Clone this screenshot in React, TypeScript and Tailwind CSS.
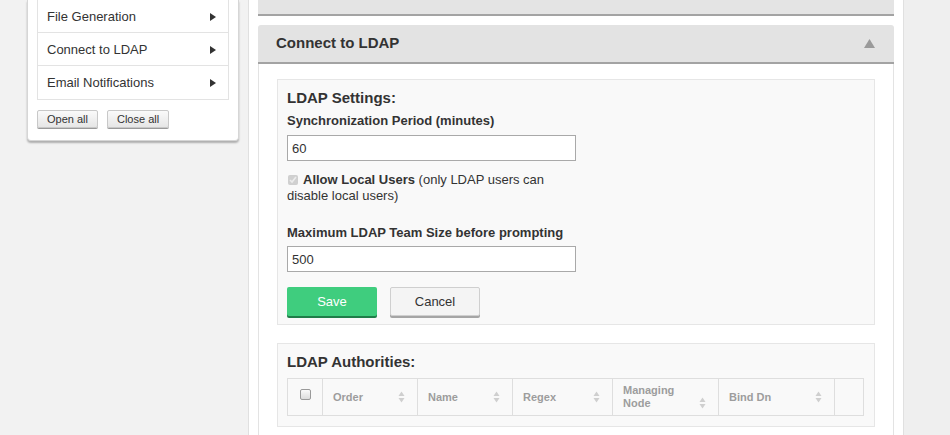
import React from 'react';

const menuItems = ['File Generation', 'Connect to LDAP', 'Email Notifications'];

const columns = [
  { label: 'Order', width: 'w-[95px]' },
  { label: 'Name', width: 'w-[95px]' },
  { label: 'Regex', width: 'w-[100px]' },
  { label: 'Managing Node', width: 'w-[106px]' },
  { label: 'Bind Dn', width: 'w-[116px]' },
];

const SortIcon: React.FC = () => (
  <svg width="7" height="12" viewBox="0 0 7 12" className="shrink-0">
    <path d="M3.5 0.5 L6.5 5 L0.5 5 Z" fill="#cfcfcf" />
    <path d="M0.5 7 L6.5 7 L3.5 11.5 Z" fill="#cfcfcf" />
  </svg>
);

const SidebarButton: React.FC<{ label: string }> = ({ label }) => (
  <button className="h-[18px] rounded-[2px] border border-[#c8c8c8] bg-gradient-to-b from-[#fafafa] to-[#e6e6e6] px-[9px] text-[11px] leading-none text-[#333] shadow-[0_1px_0_#9a9a9a]">
    {label}
  </button>
);

export default function App() {
  return (
    <div className="flex h-[435px] w-[950px] overflow-hidden bg-[#f2f2f2] font-['Liberation_Sans',Arial,sans-serif] text-[#333]">
      {/* left navigation */}
      <aside className="w-[248px] shrink-0 pl-[27px] pr-[9px]">
        <div className="rounded-b-[4px] border border-t-0 border-[#d6d6d6] bg-white px-[9px] pb-[12px] shadow-[0_2px_2px_rgba(0,0,0,0.28)]">
          <ul className="border-x border-b border-[#e3e3e3]">
            {menuItems.map((item, i) => (
              <li
                key={item}
                className={`flex h-[33px] items-center justify-between pl-[9px] pr-[12px] pt-px text-[13px] ${
                  i < menuItems.length - 1 ? 'border-b border-[#e3e3e3]' : ''
                }`}
              >
                <span>{item}</span>
                <svg width="6" height="8" viewBox="0 0 6 8">
                  <path d="M0 0 L6 4 L0 8 Z" fill="#333" />
                </svg>
              </li>
            ))}
          </ul>
          <div className="mt-[10px] flex gap-[9px]">
            <SidebarButton label="Open all" />
            <SidebarButton label="Close all" />
          </div>
        </div>
      </aside>

      {/* main column */}
      <main className="flex w-[656px] shrink-0 flex-col border-x border-[#e0e0e0] bg-white px-[9px]">
        <div className="h-[16px] shrink-0 border-b-2 border-[#a3a3a3] bg-[#e4e4e4]" />

        <section className="mt-[9px] flex flex-1 flex-col">
          <div className="flex h-[39px] shrink-0 items-center justify-between rounded-t-[3px] border-b-2 border-[#a3a3a3] bg-[#e3e3e3] pl-[18px] pr-[19px]">
            <h2 className="text-[15px] font-bold">Connect to LDAP</h2>
            <svg width="11" height="9" viewBox="0 0 11 9">
              <path d="M5.5 0 L11 9 L0 9 Z" fill="#9a9a9a" />
            </svg>
          </div>

          <div className="flex-1 border-x border-[#e3e3e3] px-[18px] pt-[15px]">
            {/* settings */}
            <div className="border border-[#e6e6e6] bg-[#f9f9f9] pb-[8px] pl-[9px] pt-[7px]">
              <h3 className="text-[15px] font-bold leading-[22px]">LDAP Settings:</h3>
              <label className="mt-[4px] block text-[13px] font-bold leading-[15px]">
                Synchronization Period (minutes)
              </label>
              <input
                defaultValue="60"
                className="mt-[7px] block h-[26px] w-[289px] border border-[#a9a9a9] bg-white px-[4px] text-[13px] text-[#333]"
              />
              <div className="mt-[11px] w-[290px] text-[13px] leading-[16px]">
                <input type="checkbox" checked disabled readOnly className="mr-[5px] ml-px h-[10px] w-[10px] align-[-1px]" />
                <b>Allow Local Users</b>
                <span> (only LDAP users can disable local users)</span>
              </div>
              <label className="mt-[21px] block text-[13px] font-bold leading-[15px]">
                Maximum LDAP Team Size before prompting
              </label>
              <input
                defaultValue="500"
                className="mt-[6px] block h-[26px] w-[289px] border border-[#a9a9a9] bg-white px-[4px] text-[13px] text-[#333]"
              />
              <div className="mt-[15px] flex gap-[13px]">
                <button className="h-[29px] w-[90px] rounded-[2px] bg-[#3fcd7e] text-[13px] text-white shadow-[0_2px_0_#1f7d49]">
                  Save
                </button>
                <button className="h-[29px] w-[90px] rounded-[2px] border border-[#cfcfcf] bg-[#f4f4f4] text-[13px] text-[#333] shadow-[0_2px_0_#a5a5a5]">
                  Cancel
                </button>
              </div>
            </div>

            {/* authorities */}
            <div className="mt-[18px] h-[84px] border border-[#e6e6e6] bg-[#f9f9f9] pl-[9px] pt-[7px]">
              <h3 className="text-[15px] font-bold leading-[22px]">LDAP Authorities:</h3>
              <div className="mt-[5px] flex h-[38px] w-[577px] border border-[#dedede] text-[11px] font-bold text-[#9d9d9d]">
                <div className="flex w-[35px] shrink-0 items-center justify-center border-r border-[#dedede]">
                  <span className="mb-[6px] h-[11px] w-[11px] rounded-[2px] border border-[#9a9a9a] bg-gradient-to-b from-[#fafafa] to-[#dcdcdc]" />
                </div>
                {columns.map((c) => (
                  <div
                    key={c.label}
                    className={`${c.width} flex shrink-0 items-center justify-between border-r border-[#dedede] pl-[10px] pr-[12px]`}
                  >
                    <span className={c.label === 'Managing Node' ? 'w-[60px] leading-[13px]' : ''}>{c.label}</span>
                    <span className={c.label === 'Managing Node' ? 'mt-[12px]' : ''}>
                      <SortIcon />
                    </span>
                  </div>
                ))}
                <div className="flex-1" />
              </div>
            </div>
          </div>
        </section>
      </main>

      <div className="flex-1 bg-[#efefef]" />
    </div>
  );
}
